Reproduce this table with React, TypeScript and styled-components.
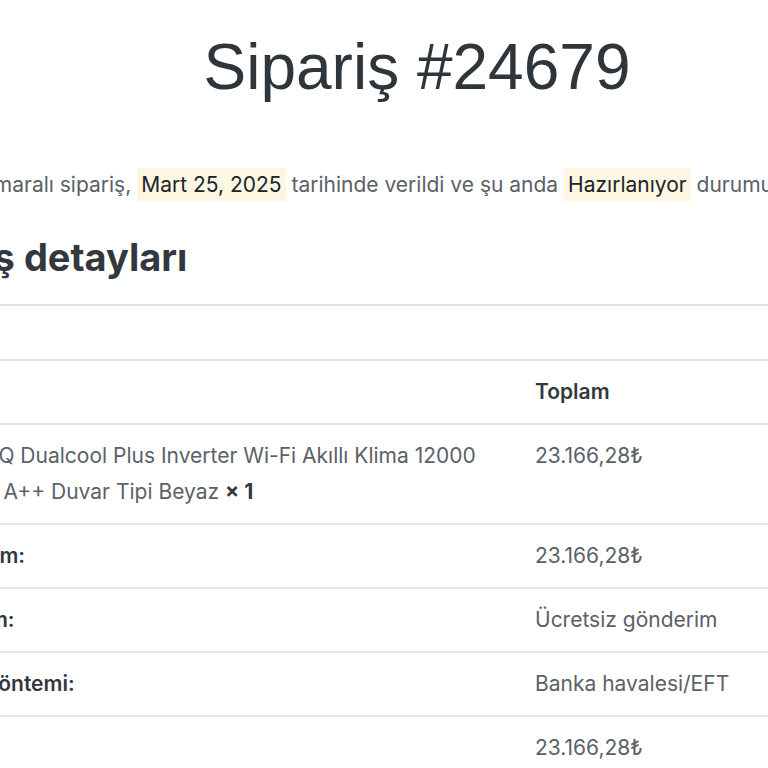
import React from 'react';
import styled, {createGlobalStyle} from 'styled-components';

const GlobalStyle = createGlobalStyle`
    html, body {
        margin: 0;
        padding: 0;
        background: #ffffff;
        overflow: hidden;
    }

    body {
        font-family: Inter, "Noto Sans", sans-serif;
        -webkit-font-smoothing: antialiased;
    }
`;

const Page = styled.main`
    width: 1078px;
    margin-left: -122px;
    padding-top: 30px;
`;

const Title = styled.h1`
    margin: 0;
    text-align: center;
    font-family: "Liberation Sans", Arial, sans-serif;
    font-size: 64px;
    font-weight: 400;
    line-height: normal;
    color: #2e353b;
`;

const Intro = styled.p`
    margin: 65px 0 0;
    font-size: 21px;
    line-height: 32px;
    color: #5b6167;
    white-space: nowrap;
`;

const Mark = styled.mark`
    background: #fcf7e2;
    color: #202428;
    padding: 4px 4px;
`;

const SectionTitle = styled.h2`
    margin: 35px 0 0;
    padding: 0 0 25px 8px;
    border-bottom: 2px solid #e4e4e4;
    font-size: 38px;
    font-weight: 700;
    line-height: 43px;
    color: #32383e;
`;

const Table = styled.table`
    width: 100%;
    margin-top: 53px;
    border-collapse: collapse;
    table-layout: fixed;
    font-size: 21px;
    line-height: 36px;
`;

const Cell = styled.td<{$bold?: boolean; $width?: string}>`
    width: ${props => props.$width || 'auto'};
    padding: 13px 30px;
    border-top: 2px solid #e4e4e4;
    text-align: left;
    vertical-align: top;
    white-space: nowrap;
    font-weight: ${props => (props.$bold ? 600 : 400)};
    color: ${props => (props.$bold ? '#32383e' : '#5b6167')};
`;

const Qty = styled.strong`
    font-weight: 700;
    color: #32383e;
`;

const totals = [
    {label: 'Ara toplam:', value: '23.166,28₺'},
    {label: 'Gönderim:', value: 'Ücretsiz gönderim'},
    {label: 'Ödeme yöntemi:', value: 'Banka havalesi/EFT'},
    {label: 'Toplam:', value: '23.166,28₺'},
];

const App = () => (
    <>
        <GlobalStyle />
        <Page>
            <Title>Sipariş #24679</Title>
            <Intro>
                <Mark>#24679</Mark> numaralı sipariş, <Mark>Mart 25, 2025</Mark> tarihinde verildi ve şu anda{' '}
                <Mark>Hazırlanıyor</Mark> durumunda.
            </Intro>
            <SectionTitle>Sipariş detayları</SectionTitle>
            <Table>
                <thead>
                    <tr>
                        <Cell as="th" $bold $width="567px">
                            Ürün
                        </Cell>
                        <Cell as="th" $bold>
                            Toplam
                        </Cell>
                    </tr>
                </thead>
                <tbody>
                    <tr>
                        <Cell>
                            LG® ThinQ Dualcool Plus Inverter Wi-Fi Akıllı Klima 12000
                            <br />
                            BTU/saat A++ Duvar Tipi Beyaz <Qty>× 1</Qty>
                        </Cell>
                        <Cell>23.166,28₺</Cell>
                    </tr>
                    {totals.map(row => (
                        <tr key={row.label}>
                            <Cell as="th" $bold>
                                {row.label}
                            </Cell>
                            <Cell>{row.value}</Cell>
                        </tr>
                    ))}
                </tbody>
            </Table>
        </Page>
    </>
);

export default App;
